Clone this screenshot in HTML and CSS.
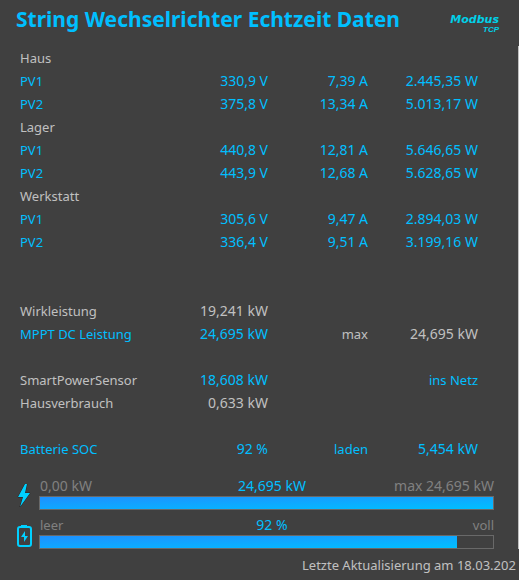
FILE: index.html
```html
<!DOCTYPE html>
<html lang="de">
<head>
    <meta charset="utf-8" />
    <title>String Wechselrichter Echtzeit Daten</title>
    <link rel="stylesheet" href="styles.css">
</head>
<body>
    <header>
        <h1>String Wechselrichter Echtzeit Daten</h1>
        <div class="logo"><span>Modbus</span><small>TCP</small></div>
    </header>
    <main>
        <table>
            <colgroup><col><col class="volt"><col class="ampere"><col class="watt"></colgroup>
            <tr class="grau"><th>Haus</th><td></td><td></td><td></td></tr>
            <tr><th>PV1</th><td>330,9 V</td><td>7,39 A</td><td>2.445,35 W</td></tr>
            <tr><th>PV2</th><td>375,8 V</td><td>13,34 A</td><td>5.013,17 W</td></tr>
            <tr class="grau"><th>Lager</th><td></td><td></td><td></td></tr>
            <tr><th>PV1</th><td>440,8 V</td><td>12,81 A</td><td>5.646,65 W</td></tr>
            <tr><th>PV2</th><td>443,9 V</td><td>12,68 A</td><td>5.628,65 W</td></tr>
            <tr class="grau"><th>Werkstatt</th><td></td><td></td><td></td></tr>
            <tr><th>PV1</th><td>305,6 V</td><td>9,47 A</td><td>2.894,03 W</td></tr>
            <tr><th>PV2</th><td>336,4 V</td><td>9,51 A</td><td>3.199,16 W</td></tr>
            <tr><td colspan="4"></td></tr>
            <tr><td colspan="4"></td></tr>
            <tr class="grau"><th>Wirkleistung</th><td>19,241 kW</td><td></td><td></td></tr>
            <tr><th>MPPT DC Leistung</th><td>24,695 kW</td><td class="grau text">max</td><td class="grau">24,695 kW</td></tr>
            <tr><td colspan="4"></td></tr>
            <tr><th class="grau">SmartPowerSensor</th><td>18,608 kW</td><td></td><td class="text">ins Netz</td></tr>
            <tr class="grau"><th>Hausverbrauch</th><td>0,633 kW</td><td></td><td></td></tr>
            <tr><td colspan="4"></td></tr>
            <tr><th>Batterie SOC</th><td>92 %</td><td class="text">laden</td><td>5,454 kW</td></tr>
        </table>

        <section class="anzeige">
            <svg width="16" height="26" viewBox="0 0 16 26">
                <path d="M9 0 L2 13 H7 L4 23 L14 9 H9 L11 0 Z" fill="#00d0ff" stroke="#222" stroke-width="1" paint-order="stroke"/>
            </svg>
            <div class="messung">
                <div class="skala"><span>0,00 kW</span><b>24,695 kW</b><span>max 24,695 kW</span></div>
                <div class="balken"><div class="wert" style="width: 100%"></div></div>
            </div>
        </section>
        <section class="anzeige">
            <svg width="16" height="26" viewBox="0 0 16 26">
                <path d="M5 4 V2 H11 V4" fill="#00d0ff"/>
                <rect x="2" y="4" width="13" height="19" rx="2" fill="none" stroke="#00d0ff" stroke-width="2"/>
                <path d="M9 8 L5 14 H8 V19 L12 13 H9 Z" fill="#00d0ff"/>
            </svg>
            <div class="messung">
                <div class="skala text"><span>leer</span><b>92 %</b><span>voll</span></div>
                <div class="balken"><div class="wert" style="width: 92%"></div></div>
            </div>
        </section>
    </main>
    <footer>Letzte Aktualisierung am 18.03.202</footer>
</body>
</html>
```
FILE: styles.css
```css
* {
    box-sizing: border-box;
}

body {
    margin: 0;
    background-color: #404040;
    color: #00bfff;
    font-family: "Noto Sans", "Open Sans", sans-serif;
    font-size: 13px;
    line-height: 20px;
    overflow: hidden;
}

header {
    display: flex;
    justify-content: space-between;
    height: 46px;
    padding: 3px 20px 0 16px;
}

h1 {
    margin: 0;
    font-size: 21px;
    line-height: 32px;
    white-space: nowrap;
}

.logo {
    display: flex;
    flex-direction: column;
    align-items: flex-end;
    padding-top: 12px;
    color: #00d0e8;
    font-family: "DejaVu Sans", sans-serif;
    font-size: 11px;
    font-weight: bold;
    font-style: italic;
    line-height: 10px;
}

.logo small {
    font-family: "Liberation Sans", sans-serif;
    font-size: 8px;
}

main {
    padding-right: 24px;
    border-right: 1px solid #c0c0c0;
}

table {
    width: 100%;
    padding: 0 16px 0 20px;
    table-layout: fixed;
    border-spacing: 0;
}

.volt, .ampere {
    width: 100px;
}

.watt {
    width: 110px;
}

tr {
    height: 23px;
}

th, td {
    padding: 0;
    text-align: right;
    font-weight: normal;
    white-space: nowrap;
}

th {
    text-align: left;
}

td, .skala {
    font-size: 14px;
}

.grau {
    color: #c0c0c0;
}

.anzeige {
    display: flex;
    align-items: flex-end;
    gap: 7px;
    padding: 16px 0 0 16px;
}

.anzeige + .anzeige {
    padding-top: 5px;
}

.messung {
    flex: 1;
}

.skala {
    display: grid;
    grid-template-columns: 1fr auto 1fr;
    padding-left: 1px;
    color: #808080;
}

.skala b {
    padding-left: 10px;
    color: #00bfff;
    font-size: 14px;
    font-weight: normal;
}

.skala span:last-child {
    text-align: right;
}

.text {
    font-size: 13px;
}

.balken {
    height: 14px;
    border: 1px solid #696969;
}

.wert {
    height: 100%;
    background: linear-gradient(to bottom right, #1e90ff, #00bfff);
}

footer {
    padding: 6px 0 0 302px;
    color: #c0c0c0;
    white-space: nowrap;
}
```
